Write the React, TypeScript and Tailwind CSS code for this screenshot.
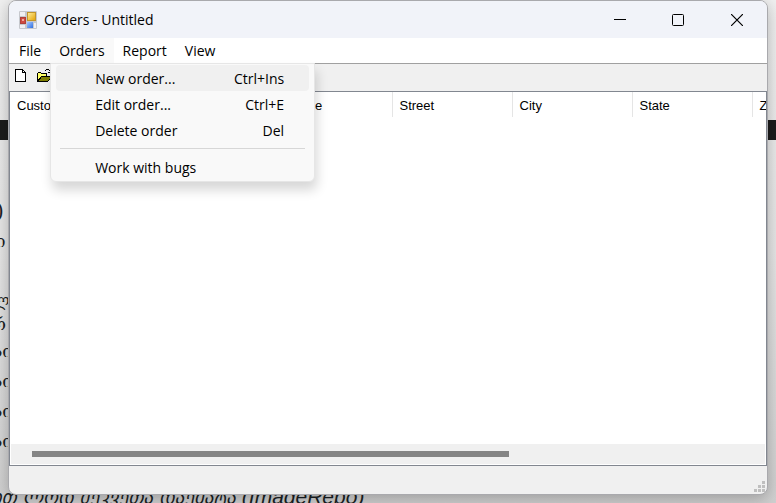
import React from "react";

const ui = "font-['Open_Sans','Noto_Sans',sans-serif]";

const menus = ["File", "Orders", "Report", "View"];

const commands = [
  { label: "New order...", keys: "Ctrl+Ins", active: true },
  { label: "Edit order...", keys: "Ctrl+E", active: false },
  { label: "Delete order", keys: "Del", active: false },
];

const columns = ["Customer ID", "Surname", "Street", "City", "State", "ZIP"];

function AppIcon() {
  return (
    <svg width="18" height="18" viewBox="0 0 18 18" aria-hidden="true">
      <defs>
        <linearGradient id="gold" x1="0" y1="0" x2="1" y2="1">
          <stop offset="0" stopColor="#fff0a0" />
          <stop offset="1" stopColor="#e3a000" />
        </linearGradient>
        <linearGradient id="blue" x1="0" y1="0" x2="1" y2="1">
          <stop offset="0" stopColor="#a8c8ff" />
          <stop offset="1" stopColor="#2f6fe0" />
        </linearGradient>
      </defs>
      <rect width="18" height="18" rx="1" fill="#c6c8cd" />
      <rect x="1" y="1" width="5" height="4" fill="#f0f0f3" />
      <rect x="1" y="14" width="5" height="3" fill="#f0f0f3" />
      <rect x="15" y="12" width="2" height="5" fill="#f0f0f3" />
      <rect x="8.5" y="1.5" width="8" height="8" fill="url(#gold)" stroke="#c2952a" />
      <rect x="1.5" y="6.5" width="5" height="6" fill="#cf4a40" stroke="#b0403a" />
      <rect x="3" y="8" width="2" height="2" fill="#f0a8a0" />
      <rect x="8" y="11" width="6" height="6" fill="url(#blue)" />
    </svg>
  );
}

function NewIcon() {
  return (
    <svg width="12" height="14" viewBox="0 0 12 14" shapeRendering="crispEdges" aria-hidden="true">
      <path d="M.5 .5H7.5L10.5 3.5V12.5H.5Z" fill="#fff" stroke="#000" />
      <path d="M7.5 .5V3.5H10.5" fill="none" stroke="#000" />
    </svg>
  );
}

function OpenIcon() {
  return (
    <svg width="16" height="14" viewBox="0 0 16 14" shapeRendering="crispEdges" aria-hidden="true">
      <path d="M.5 12.5V4.5L1.5 3.5H3.5L4.5 4.5H9.5V7.5" fill="#ffff66" stroke="#000" />
      <path d="M.5 12.5L4.5 7.5H15L10.5 12.5Z" fill="#808000" stroke="#000" />
      <path d="M8 1.5H9M9 .5H12M12 1.5H13M13 2.5H14M11 3.5H14M14 1V4" fill="none" stroke="#000" />
    </svg>
  );
}

function Grip() {
  return (
    <svg width="11" height="11" viewBox="0 0 11 11" fill="#bfbfbf" shapeRendering="crispEdges" aria-hidden="true">
      <path d="M8 0h3v3H8zM4 4h3v3H4zM8 4h3v3H8zM0 8h3v3H0zM4 8h3v3H4zM8 8h3v3H8z" />
    </svg>
  );
}

function OrdersMenu() {
  return (
    <div
      role="menu"
      className="absolute left-0 top-full z-10 w-[265px] rounded-b-md border border-[#e6e6e6] bg-[#f9f9f9] px-[5px] pb-px pt-px shadow-[2px_8px_12px_rgba(0,0,0,0.16)]"
    >
      {commands.map((c) => (
        <button
          key={c.label}
          role="menuitem"
          className={`flex h-[26px] w-full items-center justify-between rounded pl-[39px] pr-[25px] pt-px ${c.active ? "bg-[#f0f0f0]" : ""}`}
        >
          <span>{c.label}</span>
          <span>{c.keys}</span>
        </button>
      ))}
      <hr className="mx-1 my-[5px] border-[#d7d7d7]" />
      <button role="menuitem" className="flex h-[26px] w-full items-center rounded pl-[39px] pt-px">
        Work with bugs
      </button>
    </div>
  );
}

function Backdrop() {
  return (
    <div
      aria-hidden="true"
      className="absolute inset-0 overflow-hidden whitespace-nowrap bg-linear-to-b from-[#f0f0f0] via-[#e6e6e6] to-[#d0d0d0] pt-[120px] text-[#1a1f24]"
    >
      <div className="h-5 bg-[#1c1c1c]" />
      <div className="flex h-[347px] flex-col pt-14 font-['DejaVu_Serif',serif] text-[17px] leading-[30px]">
        <p className="-ml-1 text-xl leading-[30px]">)</p>
        <p className="-ml-1">ი</p>
        <p className="-ml-2 mt-8 leading-6">ლ</p>
        <p className="-ml-2 leading-6">რ</p>
        <p className="-ml-2">სი</p>
        <p className="-ml-2">სი</p>
        <p className="-ml-2">სი</p>
        <p className="-ml-2">სი</p>
      </div>
      <p className="-ml-2 font-['DejaVu_Sans',sans-serif] text-[19px] italic leading-5">
        ით ლოდ შეკვეთა დაემატა{" "}
        <span className="font-['Liberation_Sans',Arial,sans-serif] text-[21px]">(ImageRepo)</span>
      </p>
    </div>
  );
}

export default function App() {
  return (
    <div className="relative h-screen overflow-hidden">
      <Backdrop />
      <div className="relative h-full px-2 pb-2">
        <main
          className={`flex h-full flex-col overflow-hidden rounded-lg border border-[#a9a9ad] bg-[#f0f0f0] text-[14px] leading-5 text-black shadow-[0_4px_16px_rgba(0,0,0,0.25)] ${ui}`}
        >
          <header className="flex h-[37px] shrink-0 items-center bg-[#f1f3f9] pl-[10px]">
            <AppIcon />
            <h1 className="ml-[7px] flex-1">Orders - Untitled</h1>
            <button aria-label="Minimize" className="flex h-full w-[58px] items-center justify-center">
              <svg width="12" height="12" viewBox="0 0 12 12" stroke="#000">
                <path d="M0 5.5H12" />
              </svg>
            </button>
            <button aria-label="Maximize" className="flex h-full w-[58px] items-center justify-center">
              <svg width="12" height="12" viewBox="0 0 12 12" fill="none" stroke="#000">
                <rect x=".5" y=".5" width="11" height="11" rx="1" />
              </svg>
            </button>
            <button aria-label="Close" className="flex h-full w-[60px] items-center justify-center">
              <svg width="12" height="12" viewBox="0 0 12 12" stroke="#000" strokeWidth="1.2">
                <path d="M0 0L12 12M12 0L0 12" />
              </svg>
            </button>
          </header>

          <nav className="flex h-[25px] shrink-0 bg-white pl-px">
            {menus.map((m) => (
              <div key={m} className={`relative ${m === "Orders" ? "bg-[#f9f9f9]" : ""}`}>
                <button className="flex h-full items-center px-[9px]">{m}</button>
                {m === "Orders" && <OrdersMenu />}
              </div>
            ))}
          </nav>

          <div className="flex h-7 shrink-0 items-center gap-[10px] border-t border-[#a0a0a0] pl-[6px] pb-[3px]">
            <button aria-label="New">
              <NewIcon />
            </button>
            <button aria-label="Open">
              <OpenIcon />
            </button>
          </div>

          <section className="flex min-h-0 flex-1 flex-col border border-[#828790] bg-white">
            <div className="flex-1 overflow-hidden">
              <table className="w-[861px] table-fixed font-['Liberation_Sans',Arial,sans-serif] text-[13px] leading-4">
                <colgroup>
                  <col className="w-[252px]" />
                  <col className="w-[130px]" />
                  <col className="w-[120px]" />
                  <col className="w-[120px]" />
                  <col className="w-[120px]" />
                  <col />
                </colgroup>
                <thead>
                  <tr className="h-[25px]">
                    {columns.map((c) => (
                      <th key={c} scope="col" className="border-r border-[#e5e5e5] pl-[7px] pt-[2px] text-left font-normal">
                        {c}
                      </th>
                    ))}
                  </tr>
                </thead>
              </table>
            </div>
            <div className="mx-px mb-px flex h-5 shrink-0 items-center bg-[#f0f0f0] px-[21px]">
              <div className="h-[6px] w-[67%] bg-[#858585]" />
            </div>
          </section>

          <footer className="flex h-7 shrink-0 items-end justify-end pb-[2px] pr-[2px]">
            <Grip />
          </footer>
        </main>
      </div>
    </div>
  );
}
